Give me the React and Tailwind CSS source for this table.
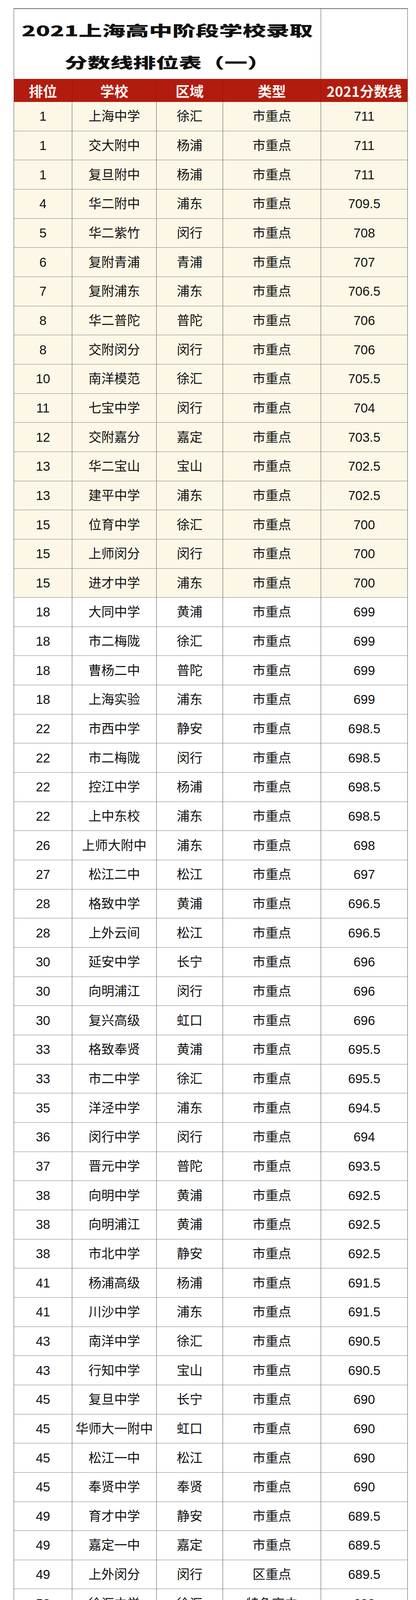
import React from "react";

const raw = `1 上海中学 徐汇 市重点 711
1 交大附中 杨浦 市重点 711
1 复旦附中 杨浦 市重点 711
4 华二附中 浦东 市重点 709.5
5 华二紫竹 闵行 市重点 708
6 复附青浦 青浦 市重点 707
7 复附浦东 浦东 市重点 706.5
8 华二普陀 普陀 市重点 706
8 交附闵分 闵行 市重点 706
10 南洋模范 徐汇 市重点 705.5
11 七宝中学 闵行 市重点 704
12 交附嘉分 嘉定 市重点 703.5
13 华二宝山 宝山 市重点 702.5
13 建平中学 浦东 市重点 702.5
15 位育中学 徐汇 市重点 700
15 上师闵分 闵行 市重点 700
15 进才中学 浦东 市重点 700
18 大同中学 黄浦 市重点 699
18 市二梅陇 徐汇 市重点 699
18 曹杨二中 普陀 市重点 699
18 上海实验 浦东 市重点 699
22 市西中学 静安 市重点 698.5
22 市二梅陇 闵行 市重点 698.5
22 控江中学 杨浦 市重点 698.5
22 上中东校 浦东 市重点 698.5
26 上师大附中 浦东 市重点 698
27 松江二中 松江 市重点 697
28 格致中学 黄浦 市重点 696.5
28 上外云间 松江 市重点 696.5
30 延安中学 长宁 市重点 696
30 向明浦江 闵行 市重点 696
30 复兴高级 虹口 市重点 696
33 格致奉贤 黄浦 市重点 695.5
33 市二中学 徐汇 市重点 695.5
35 洋泾中学 浦东 市重点 694.5
36 闵行中学 闵行 市重点 694
37 晋元中学 普陀 市重点 693.5
38 向明中学 黄浦 市重点 692.5
38 向明浦江 黄浦 市重点 692.5
38 市北中学 静安 市重点 692.5
41 杨浦高级 杨浦 市重点 691.5
41 川沙中学 浦东 市重点 691.5
43 南洋中学 徐汇 市重点 690.5
43 行知中学 宝山 市重点 690.5
45 复旦中学 长宁 市重点 690
45 华师大一附中 虹口 市重点 690
45 松江一中 松江 市重点 690
45 奉贤中学 奉贤 市重点 690
49 育才中学 静安 市重点 689.5
49 嘉定一中 嘉定 市重点 689.5
49 上外闵分 闵行 区重点 689.5
52 徐汇中学 徐汇 特色高中 688
52 格致奉贤 奉贤 市重点 688
54 南汇中学 浦东 市重点 687.5
55 敬业中学 黄浦 市重点 687
55 青浦中学 青浦 市重点 687
55 复旦二附 杨浦 普高 687
58 新中中学 静安 市重点 686
58 同济一附 杨浦 市重点 686
60 宜川中学 普陀 市重点 685.5
60 西南位育 徐汇 区重点 685.5
62 市三女中 长宁 市重点 684.5
62 吴淞中学 宝山 市重点 684.5
64 北郊高级 虹口 市重点 683.5
65 大境中学 黄浦 市重点 683
65 东昌中学 浦东 特色高中 683
67 上大附中 宝山 市重点 682
67 金山中学 金山 市重点 682
69 莘庄中学 闵行 区重点 681
70 中国中学 徐汇 区重点 680.5
71 卢湾高级 黄浦 市重点 678.5
72 曹杨中学 普陀 特色高中 677.5
72 上理附中 杨浦 特色高中 677.5
72 鑫都实验 闵行 普高 677.5
72 上师大附外 松江 区重点 677.5
76 天山中学 长宁 区重点 676.5
77 北蔡高级 浦东 特色高中 676
77 风华中学 静安 区重点 676
79 高桥中学 浦东 区重点 675.5
80 嘉定二中 嘉定 特色高中 675
80 市四中学 徐汇 区重点 675
82 光明中学 黄浦 市重点 674.5
83 闵行三中 闵行 特色高中 672.5
84 朱家角中学 青浦 市重点 672
84 虹口高级 虹口 区重点 672
86 甘泉(英语) 普陀 特色高中 671.5
87 建青实验 长宁 区重点 671
88 崇明中学 崇明 市重点 669.5
88 五爱高级 黄浦 区重点 669.5
88 市东中学 杨浦 区重点 669.5
91 罗店中学 宝山 区重点 669
91 民办宋庆龄 青浦 普高 669
93 五十四中 徐汇 区重点 668.5
94 华师三附 金山 市重点 668
94 民立中学 静安 区重点 668
94 周浦中学 浦东 区重点 668
97 曙光中学 奉贤 区重点 666.5
98 华政附中 长宁 特色高中 665
98 华理科高 闵行 区重点 665
100 同济二附中 普陀 特色高中 664
100 市八中学 黄浦 区重点 664`;

const rows = raw.split("\n").map((l) => l.trim().split(/\s+/));

const COLS = "grid grid-cols-[149px_216px_170px_251px_222px]";

export default function App() {
  return (
    <div
      className="bg-white pt-[21px] pb-[18px] pl-[35px] text-[#111]"
      style={{ fontFamily: '"Liberation Sans", "Noto Sans CJK SC", sans-serif' }}
    >
      <div className="w-[1009px] border-l border-t-2 border-l-[#555] border-t-[#6e6e6e] border-b border-b-[#9a9a9a]">
        {/* Title row */}
        <div className="flex h-[179px] bg-white">
          <div className="w-[786px] border-r border-[#555] pt-[13px] flex flex-col items-center">
            <div className="h-[82px] flex items-center justify-center">
              <span
                className="inline-block scale-x-[1.62] text-[37px] font-black leading-none text-[#111]"
                style={{ fontFamily: '"Noto Sans CJK SC", sans-serif' }}
              >
                2021上海高中阶段学校录取
              </span>
            </div>
            <div className="h-[82px] flex items-center justify-center">
              <span
                className="inline-block scale-x-[1.58] text-[37px] font-black leading-none text-[#111]"
                style={{ fontFamily: '"Noto Sans CJK SC", sans-serif' }}
              >
                分数线排位表（一）
              </span>
            </div>
          </div>
          <div className="w-[222px] border-r border-[#555]"></div>
        </div>

        {/* Header row */}
        <div
          className={`${COLS} h-[59px] bg-[#b21c0f] text-[#fff6f0] text-[36px] font-bold`}
          style={{ fontFamily: '"Noto Sans CJK SC", sans-serif' }}
        >
          {["排位", "学校", "区域", "类型", "2021分数线"].map((h, i) => (
            <div
              key={i}
              className={`flex items-center justify-center leading-none ${i < 4 ? "border-r border-[#8e1509]" : "border-r border-[#555]"}`}
            >
              {h}
            </div>
          ))}
        </div>

        {/* Body rows */}
        {rows.map((r, idx) => (
          <div
            key={idx}
            className={`${COLS} h-[74.67px] text-[33px] ${idx < 17 ? "bg-[#fcf7e6]" : "bg-white"} ${idx === rows.length - 1 ? "" : "border-b border-[#858585]"}`}
          >
            {r.map((c, i) => (
              <div
                key={i}
                className="flex items-center justify-center border-r border-[#555] leading-none whitespace-nowrap"
              >
                {c}
              </div>
            ))}
          </div>
        ))}
      </div>
    </div>
  );
}
